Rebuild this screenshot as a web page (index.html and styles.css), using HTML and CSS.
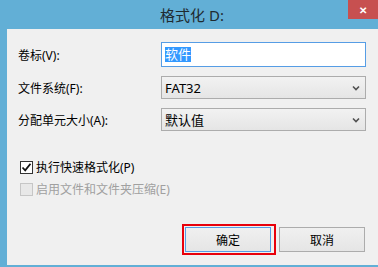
FILE: index.html
```html
<!DOCTYPE html>
<html lang="zh-CN">
<head>
    <meta charset="UTF-8">
    <title>格式化 D:</title>
    <link rel="stylesheet" href="styles.css">
</head>
<body>
    <div class="window">
        <div class="titlebar">
            <span class="title">格式化 D:</span>
            <span class="close">&#x2715;</span>
        </div>
        <div class="content">
            <div class="fields">
                <label class="label">卷标(V):</label>
                <div class="textbox"><span class="selected">软件</span></div>

                <label class="label">文件系统(F):</label>
                <div class="combo">
                    <span>FAT32</span>
                    <svg class="chevron" width="8" height="6" viewBox="0 0 8 6"><path d="M1 1.5 L4 4.5 L7 1.5" fill="none" stroke="#505050" stroke-width="1.6"/></svg>
                </div>

                <label class="label">分配单元大小(A):</label>
                <div class="combo">
                    <span>默认值</span>
                    <svg class="chevron" width="8" height="6" viewBox="0 0 8 6"><path d="M1 1.5 L4 4.5 L7 1.5" fill="none" stroke="#505050" stroke-width="1.6"/></svg>
                </div>
            </div>

            <div class="options">
                <div class="check-row">
                    <span class="checkbox">
                        <svg width="11" height="11" viewBox="0 0 11 11"><path d="M1.5 5.5 L4.2 8.3 L9.5 1.8" fill="none" stroke="#111" stroke-width="1.8"/></svg>
                    </span>
                    <span>执行快速格式化(P)</span>
                </div>
                <div class="check-row disabled">
                    <span class="checkbox"></span>
                    <span>启用文件和文件夹压缩(E)</span>
                </div>
            </div>

            <div class="buttons">
                <span class="highlight"><button class="btn default">确定</button></span>
                <button class="btn">取消</button>
            </div>
        </div>
    </div>
</body>
</html>
```

FILE: styles.css
```css
/* Page */
body {
    margin: 0;
    padding: 0;
    background-color: #62afd6;
    font-family: "Noto Sans", "Noto Sans CJK SC", sans-serif;
    font-size: 12px;
    color: #000;
}

/* Window frame */
.window {
    width: 378px;
    height: 267px;
    padding: 0 0 2px 7px;
    box-sizing: border-box;
    background-color: #62afd6;
    display: flex;
    flex-direction: column;
}

.titlebar {
    position: relative;
    height: 29px;
    margin-left: -7px;
    display: flex;
    align-items: center;
    justify-content: center;
}

.title {
    font-size: 15px;
    color: #1f2a30;
    padding-left: 6px;
    margin-top: -1px;
}

.close {
    position: absolute;
    top: 0;
    right: 0;
    width: 30px;
    height: 19px;
    background-color: #c75050;
    color: white;
    font-size: 10px;
    font-weight: bold;
    display: flex;
    align-items: center;
    justify-content: center;
}

/* Dialog body */
.content {
    flex: 1;
    background-color: #f0f0f0;
    padding: 13px 12px 0 11px;
}

.fields {
    display: grid;
    grid-template-columns: 143px 205px;
    grid-template-rows: 25px 23px 23px;
    row-gap: 9px;
    align-items: center;
}

.label {
    color: #000;
}

.textbox {
    height: 25px;
    box-sizing: border-box;
    border: 1px solid #569de5;
    background-color: white;
    padding: 0 3px;
    display: flex;
    align-items: center;
}

.selected {
    background-color: #3399ff;
    color: white;
    line-height: 15px;
    font-size: 13px;
}

.combo {
    height: 23px;
    box-sizing: border-box;
    border: 1px solid #acacac;
    background: linear-gradient(#f2f2f2, #e5e5e5);
    padding: 0 5px 0 3px;
    display: flex;
    align-items: center;
    justify-content: space-between;
    font-size: 13px;
}

/* Check boxes */
.options {
    margin-top: 25px;
    padding-left: 2px;
}

.check-row {
    height: 22px;
    display: flex;
    align-items: center;
    gap: 3px;
}

.checkbox {
    width: 13px;
    height: 13px;
    box-sizing: border-box;
    border: 1px solid #333;
    background-color: white;
    display: flex;
    align-items: center;
    justify-content: center;
}

.disabled {
    color: #a0a0a0;
}

.disabled .checkbox {
    border-color: #c6c6c6;
    background-color: #e8e8e8;
}

/* Buttons */
.buttons {
    margin-top: 24px;
    display: flex;
    justify-content: flex-end;
    align-items: center;
    padding-right: 1px;
}

.highlight {
    border: 2px solid #e8000b;
    padding: 1px 3px 1px 1px;
    display: flex;
    margin-right: 3px;
}

.btn {
    width: 86px;
    height: 25px;
    border: 1px solid #acacac;
    background: linear-gradient(#f0f0f0, #e5e5e5);
    font-family: "Noto Sans CJK SC", sans-serif;
    font-size: 12px;
    color: #000;
    padding: 0;
}

.btn.default {
    border-color: #569de5;
}
```
